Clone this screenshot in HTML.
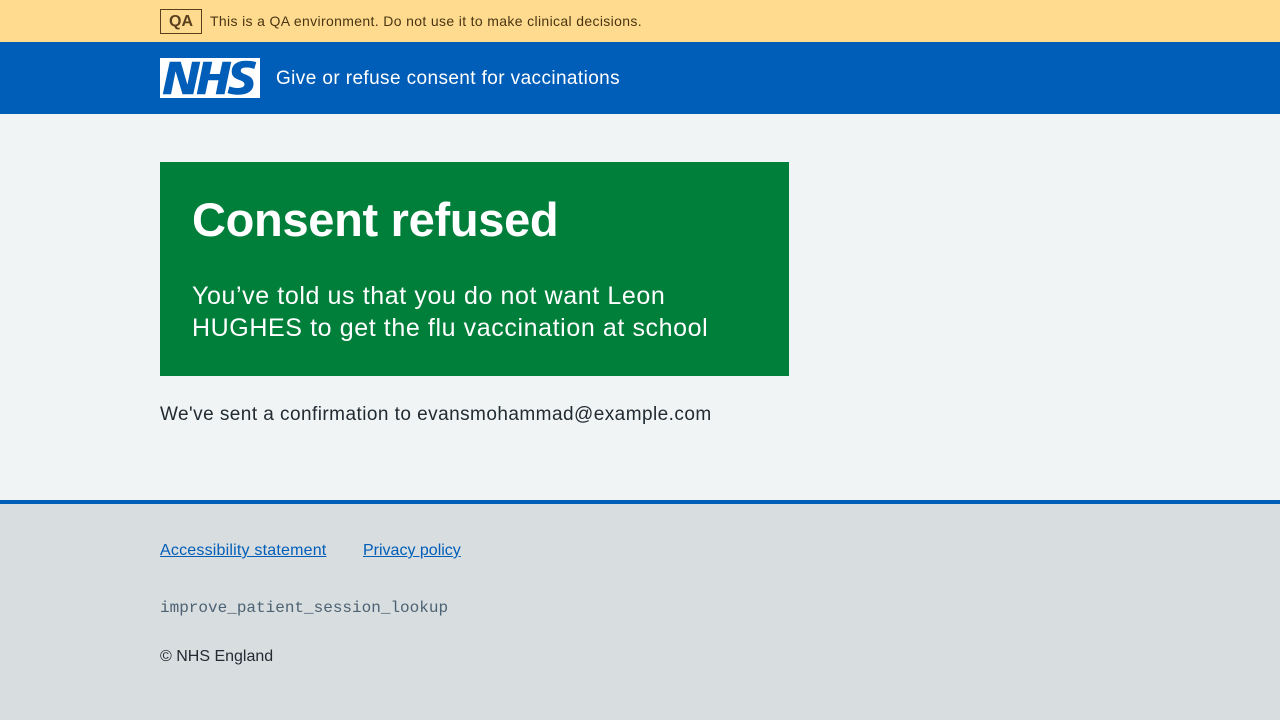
<!DOCTYPE html>
<html><head><meta charset="utf-8"><style>
*{margin:0;padding:0;box-sizing:border-box}
body{width:1280px;height:720px;background:#f0f4f5;font-family:"Liberation Sans",sans-serif;color:#212b32;position:relative;overflow:hidden}
.qa{height:42px;background:#ffdb8f;position:relative}
.qa .tag{position:absolute;left:160px;top:9px;width:42px;height:25px;border:1px solid #5a3f1f;color:#5a3f1f;font-weight:bold;font-size:16px;line-height:23px;text-align:center}
.qa .t{position:absolute;left:210px;top:13px;font-size:14px;color:#4a3512;letter-spacing:0.35px}
.hd{height:72px;background:#005eb8;position:relative}
.hd svg{position:absolute;left:160px;top:16px}
.hd .t{position:absolute;left:276px;top:26px;color:#fff;font-size:19px;letter-spacing:0.4px}
.panel{position:absolute;left:160px;top:162px;width:629px;height:214px;background:#007f3b;color:#fff}
.panel h1{position:absolute;left:32px;top:30px;font-size:47px;font-weight:bold;letter-spacing:-0.3px}
.panel p{position:absolute;left:32px;top:118px;font-size:25px;line-height:32px;width:545px;letter-spacing:0.6px}
.conf{position:absolute;left:160px;top:404px;font-size:19px;letter-spacing:0.45px}
.ft{position:absolute;left:0;top:500px;width:1280px;height:220px;background:#d8dde0;border-top:4px solid #005eb8}
.ft a{position:absolute;top:38px;font-size:16px;color:#005eb8;text-decoration:underline}
.ft .m{position:absolute;left:160px;top:95px;font-family:"Liberation Mono",monospace;font-size:16px;color:#4c6272}
.ft .c{position:absolute;left:160px;top:144px;font-size:16px}
</style></head><body>
<div class="qa"><div class="tag">QA</div><div class="t">This is a QA environment. Do not use it to make clinical decisions.</div></div>
<div class="hd"><svg width="100" height="40" viewBox="0 0 40 16"><rect width="40" height="16" fill="#fff"/><path fill="#005eb8" d="M3.9 1.5h4.4l2.6 9h.1l1.8-9h3.3l-2.8 13H9l-2.7-9h-.1l-1.8 9H1.1M17.3 1.5h3.6l-1 4.9h4L25 1.5h3.5l-2.7 13h-3.5l1.1-5.6h-4.1l-1.2 5.6h-3.4M37.7 4.4c-.7-.3-1.6-.6-2.9-.6-1.4 0-2.5.2-2.5 1.3 0 1.8 5.100 1.2 5.1 5.1 0 3.6-3.3 4.5-6.4 4.5-1.3 0-2.9-.3-4-.7l.8-2.700c.7.4 2.1.7 3.2.7s2.8-.2 2.8-1.5c0-2.100-5.1-1.300-5.1-5 0-3.400 2.9-4.400 5.8-4.400 1.6 0 3.1.2 4 .6"/></svg><div class="t">Give or refuse consent for vaccinations</div></div>
<div class="panel"><h1>Consent refused</h1><p>You’ve told us that you do not want Leon HUGHES to get the flu vaccination at school</p></div>
<div class="conf">We've sent a confirmation to evansmohammad@example.com</div>
<div class="ft"><a style="left:160px;letter-spacing:0.2px">Accessibility statement</a><a style="left:363px">Privacy policy</a><div class="m">improve_patient_session_lookup</div><div class="c">© NHS England</div></div>
</body></html>
